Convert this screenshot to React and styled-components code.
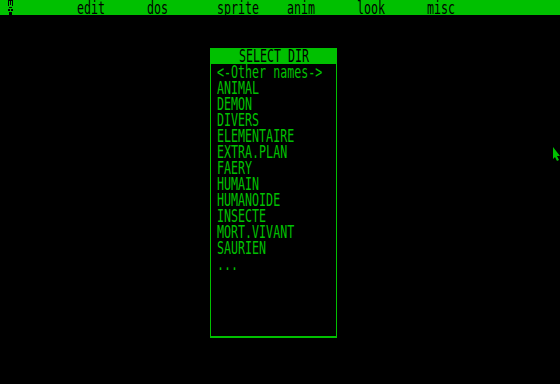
import React from 'react';
import styled, { createGlobalStyle } from 'styled-components';

const GREEN = '#00c000';

const GlobalStyle = createGlobalStyle`
    html, body {
        margin: 0;
        padding: 0;
        background: #000;
        overflow: hidden;
    }
`;

const Screen = styled.div`
    position: relative;
    width: 560px;
    height: 384px;
    background: #000;
    font-family: "DejaVu Sans Mono", "Liberation Mono", monospace;
    font-size: 11.67px;
    overflow: hidden;
`;

// text cells are 7px wide and 16px tall, like an ST system font
const Glyphs = styled.div`
    height: 11px;
    line-height: 11px;
    white-space: pre;
    transform: scaleY(1.5);
    transform-origin: 0 0;
    color: ${p => p.color || GREEN};
    text-align: ${p => p.align || 'left'};
`;

const MenuBar = styled.div`
    display: flex;
    align-items: flex-start;
    height: 15px;
    background: ${GREEN};
    border-bottom: 1px solid #000;
`;

const AppIcon = styled.svg`
    display: block;
    margin-left: 7px;
    margin-right: 63px;
`;

const MenuItem = styled.div`
    width: 70px;
    height: 16px;
`;

const Desktop = styled.div`
    display: flex;
    padding: 32px 0 0 210px;
`;

const Dialog = styled.div`
    width: 125px;
    height: 288px;
    border-left: 1px solid ${GREEN};
    border-right: 1px solid ${GREEN};
    border-bottom: 2px solid ${GREEN};
    display: flex;
    flex-direction: column;
`;

const TitleBar = styled.div`
    height: 16px;
    margin-right: -1px;
    background: ${GREEN};
`;

const List = styled.div`
    display: flex;
    flex-direction: column;
    padding: 0 0 0 6px;
`;

const Row = styled.div`
    height: 16px;
`;

const Pointer = styled.svg`
    position: absolute;
    left: 553px;
    top: 147px;
`;

const menus = ['edit', 'dos', 'sprite', 'anim', 'look', 'misc'];

const dirs = [
    '<-Other names->',
    'ANIMAL',
    'DEMON',
    'DIVERS',
    'ELEMENTAIRE',
    'EXTRA.PLAN',
    'FAERY',
    'HUMAIN',
    'HUMANOIDE',
    'INSECTE',
    'MORT.VIVANT',
    'SAURIEN',
    '...',
];

const App = () => (
    <Screen>
        <GlobalStyle />
        <MenuBar>
            <AppIcon width="7" height="15" viewBox="0 0 7 15">
                <rect x="1" y="0" width="5" height="1" fill="#000" />
                <rect x="1" y="1" width="1" height="5" fill="#000" />
                <rect x="3" y="1" width="1" height="4" fill="#000" />
                <rect x="5" y="1" width="1" height="5" fill="#000" />
                <rect x="2" y="7" width="3" height="1" fill="#000" />
                <rect x="1" y="9" width="2" height="2" fill="#000" />
                <rect x="4" y="9" width="2" height="2" fill="#000" />
                <rect x="2" y="12" width="3" height="3" fill="#000" />
            </AppIcon>
            {menus.map(m => (
                <MenuItem key={m}>
                    <Glyphs color="#000">{m}</Glyphs>
                </MenuItem>
            ))}
        </MenuBar>
        <Desktop>
            <Dialog>
                <TitleBar>
                    <Glyphs color="#000" align="center">SELECT DIR</Glyphs>
                </TitleBar>
                <List>
                    {dirs.map((d, i) => (
                        <Row key={i}>
                            <Glyphs>{d}</Glyphs>
                        </Row>
                    ))}
                </List>
            </Dialog>
        </Desktop>
        <Pointer width="8" height="14" viewBox="0 0 8 14">
            <polygon points="0,0 0,12 2,10 4,14 6,13 4,9 7,9" fill={GREEN} />
        </Pointer>
    </Screen>
);

export default App;
